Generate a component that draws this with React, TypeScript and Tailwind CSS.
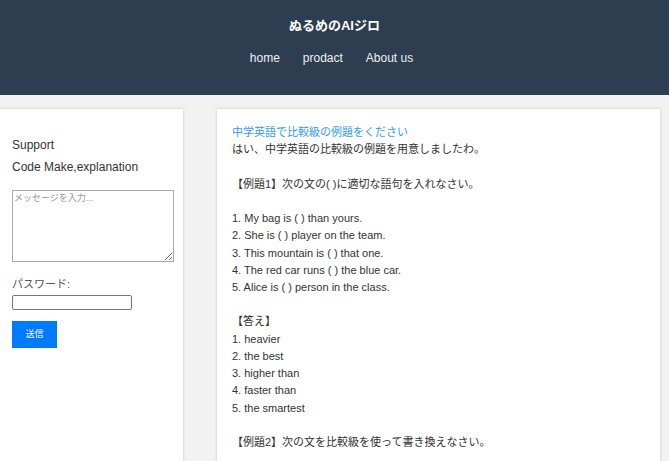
import React from 'react';

const FONT = { fontFamily: '"Liberation Sans", Arial, "Noto Sans CJK JP", sans-serif' };

const LINES: { text: string; blue?: boolean }[] = [
  { text: '中学英語で比較級の例題をください', blue: true },
  { text: 'はい、中学英語の比較級の例題を用意しましたわ。' },
  { text: '' },
  { text: '【例題1】次の文の( )に適切な語句を入れなさい。' },
  { text: '' },
  { text: '1. My bag is ( ) than yours.' },
  { text: '2. She is ( ) player on the team.' },
  { text: '3. This mountain is ( ) that one.' },
  { text: '4. The red car runs ( ) the blue car.' },
  { text: '5. Alice is ( ) person in the class.' },
  { text: '' },
  { text: '【答え】' },
  { text: '1. heavier' },
  { text: '2. the best' },
  { text: '3. higher than' },
  { text: '4. faster than' },
  { text: '5. the smartest' },
  { text: '' },
  { text: '【例題2】次の文を比較級を使って書き換えなさい。' },
];

export default function App() {
  return (
    <div className="h-[461px] overflow-hidden bg-[#f2f2f2] text-[#333]" style={FONT}>
      <header className="flex h-[95px] flex-col items-center bg-[#2c3e50] pt-[17px] text-white">
        <h1 className="text-[13px] font-bold leading-[18px]">ぬるめのAIジロ</h1>
        <nav className="mt-[14px] -ml-[6px] flex gap-[23px] text-[12px] leading-[18px] text-[#ecf0f1]">
          <span>home</span>
          <span>prodact</span>
          <span>About us</span>
        </nav>
      </header>

      <main className="flex gap-[34px] pt-[14px]">
        <aside className="h-[400px] w-[183px] shrink-0 bg-white px-[12px] pt-[28px] shadow-[0_0_3px_rgba(0,0,0,0.18)]">
          <p className="text-[12px] leading-[16px]">Support</p>
          <p className="mt-[6px] text-[12px] leading-[16px]">Code Make,explanation</p>
          <textarea
            placeholder="メッセージを入力..."
            className="mt-[15px] block h-[72px] w-[162px] resize-y border border-[#aaa] px-[1px] py-[1px] text-[9px] leading-[12px] placeholder:text-[#999]"
          />
          <p className="mt-[14px] text-[11px] leading-[16px] text-[#555]">パスワード:</p>
          <input type="password" className="mt-[3px] block h-[15px] w-[120px] rounded-[2px] border border-[#777]" />
          <button className="mt-[11px] flex h-[27px] w-[45px] items-center justify-center bg-[#007bff] text-[9px] text-white">
            送信
          </button>
        </aside>

        <section className="h-[400px] w-[443px] shrink-0 bg-white px-[15px] pt-[15px] shadow-[0_0_3px_rgba(0,0,0,0.18)]">
          {LINES.map((l, i) => (
            <p
              key={i}
              className={`h-[17.22px] whitespace-pre text-[11px] leading-[17.22px] ${l.blue ? 'text-[#3399ff]' : 'text-[#333]'}`}
            >
              {l.text}
            </p>
          ))}
        </section>
      </main>
    </div>
  );
}
